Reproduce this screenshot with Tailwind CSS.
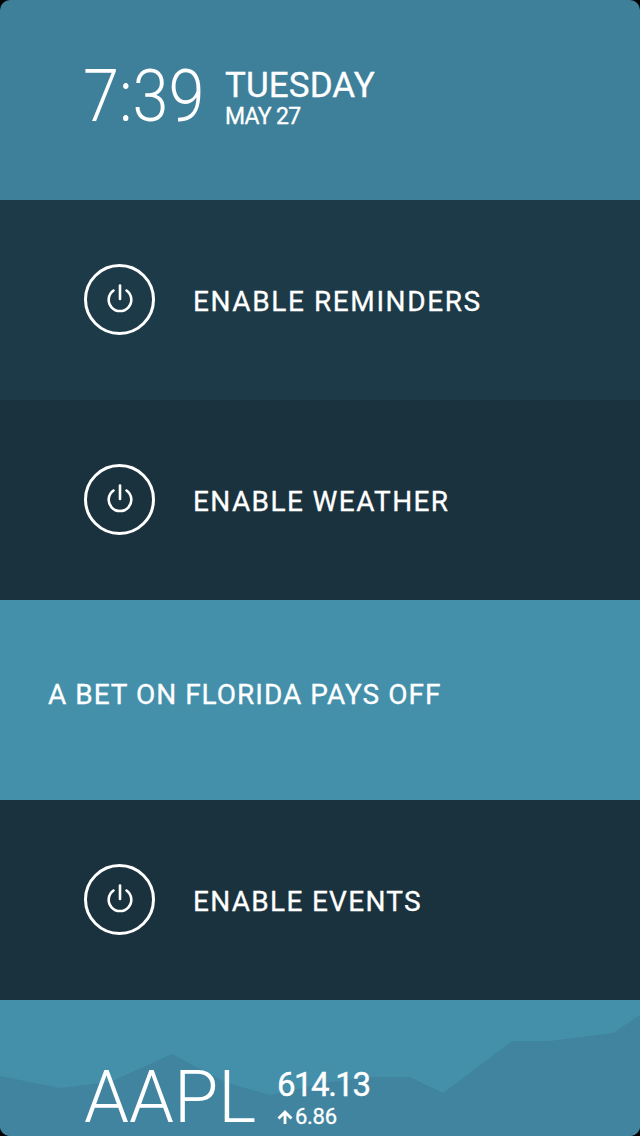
<!DOCTYPE html>
<html>
<head>
<meta charset="utf-8">
<title>Today</title>
<script src="https://cdn.jsdelivr.net/npm/@tailwindcss/browser@4"></script>
</head>
<body class="bg-black">
<div class="w-[640px] h-[1136px] overflow-hidden rounded-[10px] text-white font-['Roboto',sans-serif]">

    <!-- clock -->
    <div class="h-[200px] bg-[#3e7f9a] pl-[83px] pt-[61px] flex">
        <div class="text-[72px] leading-[72px] font-light w-[142px] origin-left scale-x-[0.9]">7:39</div>
        <div class="pt-[7px]">
            <div class="text-[35px] leading-[36px] tracking-[0.1px] [-webkit-text-stroke:0.3px_#fff]">TUESDAY</div>
            <div class="text-[23px] leading-[26px] tracking-[-0.7px] [-webkit-text-stroke:0.3px_#fff]">MAY 27</div>
        </div>
    </div>

    <div class="h-[200px] bg-[#1c3a47] pl-[84px] flex items-center">
        <div class="w-[71px] h-[71px] -mt-[2px] rounded-full border-[3px] border-white flex items-center justify-center mr-[38px]">
            <svg class="w-[30px] h-[30px]" viewBox="0 0 30 30" fill="none" stroke="white" stroke-width="2.6" stroke-linecap="round">
                <path d="M15 1.500v13.500" />
                <path d="M8.500 6.500a11.300 11.300 0 1 0 13 0" />
            </svg>
        </div>
        <span class="text-[28px] mt-[4px] tracking-[1.6px] [-webkit-text-stroke:0.3px_#fff]">ENABLE REMINDERS</span>
    </div>

    <div class="h-[200px] bg-[#1a323e] pl-[84px] flex items-center">
        <div class="w-[71px] h-[71px] -mt-[2px] rounded-full border-[3px] border-white flex items-center justify-center mr-[38px]">
            <svg class="w-[30px] h-[30px]" viewBox="0 0 30 30" fill="none" stroke="white" stroke-width="2.6" stroke-linecap="round">
                <path d="M15 1.500v13.500" />
                <path d="M8.500 6.500a11.300 11.300 0 1 0 13 0" />
            </svg>
        </div>
        <span class="text-[28px] mt-[4px] tracking-[1.4px] [-webkit-text-stroke:0.3px_#fff]">ENABLE WEATHER</span>
    </div>

    <!-- headline -->
    <div class="h-[200px] bg-[#4490ab] pl-[48px] pt-[76px]">
        <div class="text-[28px] leading-[38px] tracking-[1px] [-webkit-text-stroke:0.3px_#fff]">A BET ON FLORIDA PAYS OFF</div>
    </div>

    <div class="h-[200px] bg-[#1a323e] pl-[84px] flex items-center">
        <div class="w-[71px] h-[71px] -mt-[2px] rounded-full border-[3px] border-white flex items-center justify-center mr-[38px]">
            <svg class="w-[30px] h-[30px]" viewBox="0 0 30 30" fill="none" stroke="white" stroke-width="2.6" stroke-linecap="round">
                <path d="M15 1.500v13.500" />
                <path d="M8.500 6.500a11.300 11.300 0 1 0 13 0" />
            </svg>
        </div>
        <span class="text-[28px] mt-[4px] tracking-[1.3px] [-webkit-text-stroke:0.3px_#fff]">ENABLE EVENTS</span>
    </div>

    <!-- stock ticker with price chart behind it -->
    <div class="relative h-[136px] bg-[#4490ab] overflow-hidden">
        <svg class="absolute inset-0 w-[640px] h-[136px]" viewBox="0 0 640 136">
            <polygon fill="#41849f" points="0,76 60,88 110,82 172,54 225,82 270,95 330,82 373,77 410,77 443,93 512,41 550,41 613,33 640,15 640,136 0,136" />
        </svg>
        <div class="relative flex pl-[84px] pt-[66px]">
            <div class="text-[72px] leading-[64px] font-light w-[193px]">AAPL</div>
            <div class="pt-[2px]">
                <div class="text-[33px] leading-[34px] tracking-[-1.500px] [-webkit-text-stroke:0.4px_#fff]">614.13</div>
                <div class="flex items-center text-[22px] leading-[24px] mt-[3px]">
                    <svg class="w-[16px] h-[14px]" viewBox="0 0 16 14" fill="none" stroke="white" stroke-width="2.800">
                        <path d="M8 14V2M1.500 8.500 8 2l6.500 6.500" />
                    </svg>
                    <span class="ml-[2px] tracking-[-0.3px] [-webkit-text-stroke:0.3px_#fff]">6.86</span>
                </div>
            </div>
        </div>
    </div>
</div>
</body>
</html>
